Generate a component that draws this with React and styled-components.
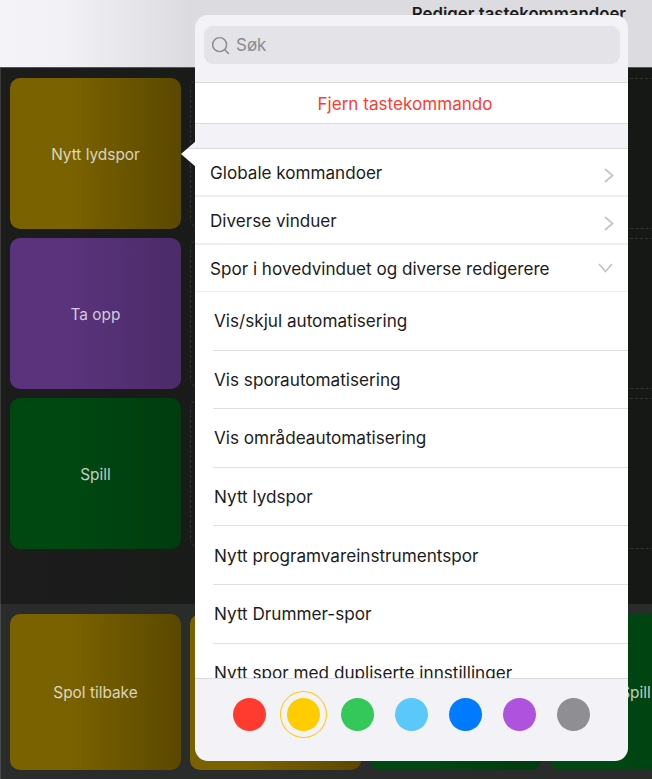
import React from "react";
import styled, { createGlobalStyle } from "styled-components";
import { Search } from "lucide-react";

const GlobalStyle = createGlobalStyle`
  html, body {
    margin: 0;
    padding: 0;
    background: #161816;
  }
  * {
    box-sizing: border-box;
  }
`;

const padColors = {
  gold: ["#7a6200", "#5b4800"],
  purple: ["#5a337c", "#4b2b68"],
  green: ["#004812", "#003c0f"],
};

const Page = styled.div`
  position: relative;
  display: flex;
  flex-direction: column;
  width: 652px;
  height: 779px;
  overflow: hidden;
  font-family: Inter, "Liberation Sans", sans-serif;
`;

const TopBar = styled.header`
  display: flex;
  justify-content: flex-end;
  height: 68px;
  padding: 4px 26px 0 0;
  background: linear-gradient(90deg, #f4f4f8 0, #f2f2f6 60px, #dcdce0 190px);
  border-bottom: 1px solid #555;
`;

const Title = styled.div`
  font-size: 16.8px;
  font-weight: 600;
  line-height: 20px;
  color: #1c1c1e;
`;

const PadArea = styled.main`
  display: grid;
  grid-template-columns: repeat(4, 171px);
  grid-auto-rows: 151px;
  gap: 9px;
  height: 536px;
  padding: 10px 0 0 9px;
  background: linear-gradient(90deg, #1b1c1b, #151815);
  border-left: 1px solid #3a3b3a;
`;

const BottomBar = styled.footer`
  display: grid;
  grid-template-columns: repeat(4, 171px);
  gap: 9px;
  flex: 1;
  padding: 10px 0 9px 9px;
  background: #2a2b2b;
  border-left: 1px solid #4a4b4b;
`;

const Pad = styled.div`
  display: flex;
  align-items: center;
  justify-content: center;
  padding-top: 1px;
  border-radius: 10px;
  font-size: 15.4px;
  color: rgba(255, 255, 255, 0.75);
  background: ${({ $tone }) =>
    `linear-gradient(90deg, ${padColors[$tone][0]} 35%, ${padColors[$tone][1]} 100%)`};
`;

const EmptySlot = styled.div`
  border: 1px dashed #333633;
  border-radius: 10px;
`;

const PopoverWrap = styled.div`
  position: absolute;
  top: 15px;
  left: 195px;
  width: 433px;
  height: 746px;
`;

const Arrow = styled.div`
  position: absolute;
  top: 126px;
  left: -14px;
  width: 15px;
  height: 26px;
  clip-path: polygon(0 50%, 100% 0, 100% 100%);
  background: linear-gradient(#f2f2f7 7px, #dedee0 7px, #dedee0 8px, #fff 8px);
`;

const Panel = styled.div`
  display: flex;
  flex-direction: column;
  height: 100%;
  overflow: hidden;
  border-radius: 13px;
  background: #f2f2f7;
`;

const SearchSection = styled.div`
  flex-shrink: 0;
  height: 68px;
  padding: 11px 8px 0 9px;
  border-bottom: 1px solid #dcdce0;
`;

const SearchField = styled.div`
  display: flex;
  align-items: center;
  gap: 5px;
  height: 38px;
  padding-left: 6px;
  border-radius: 9px;
  background: #e3e3e8;
  color: #8b8b90;
  font-size: 17px;
`;

const RemoveRow = styled.div`
  flex-shrink: 0;
  height: 41px;
  margin-bottom: 24px;
  display: flex;
  align-items: center;
  justify-content: center;
  padding: 0 13px 0 0;
  background: #fff;
  border-bottom: 1px solid #dcdce0;
  font-size: 17.1px;
  color: #ff3b30;
`;

const GroupRow = styled.div`
  flex-shrink: 0;
  display: flex;
  align-items: center;
  justify-content: space-between;
  height: 48px;
  padding: 0 15px;
  background: #fff;
  border-top: 1px solid ${({ $first }) => ($first ? "#dcdce0" : "#eeeef0")};
  border-bottom: 1px solid #eeeef0;
  font-size: 17.1px;
  color: #1c1c1e;
`;

const RightSvg = styled.svg`
  width: 10px;
  height: 15px;
  margin: 6px -1px 0 0;
  fill: none;
  stroke: #c4c4c7;
  stroke-width: 1.8;
`;

const DownSvg = styled.svg`
  width: 15px;
  height: 10px;
  fill: none;
  stroke: #c4c4c7;
  stroke-width: 1.8;
`;

const List = styled.div`
  flex: 1;
  min-height: 0;
  overflow: hidden;
  background: #fff;
`;

const Item = styled.div`
  display: flex;
  align-items: center;
  height: 58.6px;
  margin-left: 18px;
  padding-left: 1px;
  border-bottom: 1px solid #e0e0e3;
  font-size: 17.15px;
  color: #1c1c1e;
`;

const ColorBar = styled.div`
  flex-shrink: 0;
  display: flex;
  justify-content: center;
  gap: 21.17px;
  height: 83px;
  padding-top: 19px;
  border-top: 1px solid #dcdce0;
`;

const Dot = styled.div`
  width: 33px;
  height: 33px;
  border-radius: 50%;
  background: ${({ $color }) => $color};
  box-shadow: ${({ $selected, $color }) =>
    $selected ? `0 0 0 6px #f2f2f7, 0 0 0 7px ${$color}` : "none"};
`;

const ArrowRight = () => (
  <RightSvg viewBox="0 0 10 15">
    <path d="M1 1l7.5 6.5L1 14" />
  </RightSvg>
);

const ArrowDown = () => (
  <DownSvg viewBox="0 0 15 10">
    <path d="M1 1l6.5 7.5L14 1" />
  </DownSvg>
);

const pads = [
  { label: "Nytt lydspor", tone: "gold" },
  null,
  null,
  null,
  { label: "Ta opp", tone: "purple" },
  null,
  null,
  null,
  { label: "Spill", tone: "green" },
  null,
  null,
  null,
];

const bottomPads = [
  { label: "Spol tilbake", tone: "gold" },
  { label: "", tone: "gold" },
  { label: "", tone: "green" },
  { label: "Spill", tone: "green" },
];

const items = [
  "Vis/skjul automatisering",
  "Vis sporautomatisering",
  "Vis områdeautomatisering",
  "Nytt lydspor",
  "Nytt programvareinstrumentspor",
  "Nytt Drummer-spor",
  "Nytt spor med dupliserte innstillinger",
];

const colors = ["#ff3b30", "#ffcc00", "#34c759", "#5ac8fa", "#007aff", "#af52de", "#8e8e93"];

const App = () => (
  <Page>
    <GlobalStyle />
    <TopBar>
      <Title>Rediger tastekommandoer</Title>
    </TopBar>

    <PadArea>
      {pads.map((pad, i) =>
        pad ? (
          <Pad key={i} $tone={pad.tone}>
            {pad.label}
          </Pad>
        ) : (
          <EmptySlot key={i} />
        )
      )}
    </PadArea>

    <BottomBar>
      {bottomPads.map((pad, i) => (
        <Pad key={i} $tone={pad.tone}>
          {pad.label}
        </Pad>
      ))}
    </BottomBar>

    <PopoverWrap>
      <Arrow />
      <Panel>
        <SearchSection>
          <SearchField>
            <Search size={21} strokeWidth={1.7} />
            Søk
          </SearchField>
        </SearchSection>
        <RemoveRow>Fjern tastekommando</RemoveRow>
        <GroupRow $first>
          Globale kommandoer
          <ArrowRight />
        </GroupRow>
        <GroupRow>
          Diverse vinduer
          <ArrowRight />
        </GroupRow>
        <GroupRow>
          Spor i hovedvinduet og diverse redigerere
          <ArrowDown />
        </GroupRow>
        <List>
          {items.map((item) => (
            <Item key={item}>{item}</Item>
          ))}
        </List>
        <ColorBar>
          {colors.map((color) => (
            <Dot key={color} $color={color} $selected={color === "#ffcc00"} />
          ))}
        </ColorBar>
      </Panel>
    </PopoverWrap>
  </Page>
);

export default App;
